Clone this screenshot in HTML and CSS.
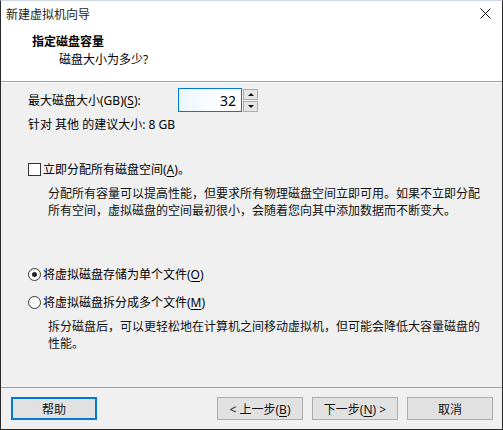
FILE: index.html
```html
<!DOCTYPE html>
<html lang="zh-CN">

<head>
  <meta charset="UTF-8">
  <meta name="viewport" content="width=device-width, initial-scale=1.0">
  <title>新建虚拟机向导</title>
  <link rel="stylesheet" href="styles.css">
</head>

<body>

  <div id="wizard">

    <div id="titlebar">
      <span>新建虚拟机向导</span>
      <svg class="close" width="11" height="11" viewBox="0 0 11 11">
        <path d="M0.5 0.5 L10.5 10.5 M10.5 0.5 L0.5 10.5" stroke="#111" stroke-width="1" fill="none" />
      </svg>
    </div>

    <div id="header">
      <div class="head-title">指定磁盘容量</div>
      <div class="head-sub">磁盘大小为多少?</div>
    </div>

    <div id="content">

      <div class="size-row">
        <label class="size-label">最大磁盘大小(GB)(<u>S</u>):</label>
        <div class="spin">
          <input class="spin-input" type="text" value="32">
          <div class="spin-buttons">
            <div class="spin-btn"><span class="arrow-up"></span></div>
            <div class="spin-btn"><span class="arrow-down"></span></div>
          </div>
        </div>
      </div>

      <div class="hint">针对 其他 的建议大小: 8 GB</div>

      <div class="option check-option">
        <span class="checkbox"></span>
        <span>立即分配所有磁盘空间(<u>A</u>)。</span>
      </div>
      <p class="desc">分配所有容量可以提高性能，但要求所有物理磁盘空间立即可用。如果不立即分配所有空间，虚拟磁盘的空间最初很小，会随着您向其中添加数据而不断变大。</p>

      <div class="option radio-first">
        <span class="radio checked"></span>
        <span>将虚拟磁盘存储为单个文件(<u>O</u>)</span>
      </div>
      <div class="option radio-second">
        <span class="radio"></span>
        <span>将虚拟磁盘拆分成多个文件(<u>M</u>)</span>
      </div>
      <p class="desc">拆分磁盘后，可以更轻松地在计算机之间移动虚拟机，但可能会降低大容量磁盘的性能。</p>

    </div>

    <div id="footer">
      <button class="btn default">帮助</button>
      <div class="spacer"></div>
      <button class="btn">&lt; 上一步(<u>B</u>)</button>
      <button class="btn">下一步(<u>N</u>) &gt;</button>
      <button class="btn">取消</button>
    </div>

  </div>

</body>

</html>
```

FILE: styles.css
```css
* {
  margin: 0;
  padding: 0;
  box-sizing: border-box;
  font-family: 'Noto Sans', 'Noto Sans CJK SC', sans-serif;
}

html,
body {
  width: 503px;
  height: 430px;
  overflow: hidden;
}

body {
  font-size: 12px;
  color: #000;
}

u {
  text-decoration: underline;
  text-underline-offset: 2px;
}

#wizard {
  display: flex;
  flex-direction: column;
  width: 503px;
  height: 430px;
  border: 1px solid #2a2a2a;
  border-top-color: #cfd8e2;
  background-color: #f0f0f0;
}

#titlebar {
  height: 25px;
  display: flex;
  align-items: center;
  justify-content: space-between;
  padding: 0 11px 0 5px;
  background-color: #fff;
  color: #222;
}

#titlebar .close {
  margin-top: -1px;
}

#header {
  height: 56px;
  background-color: #fff;
  border-bottom: 1px solid #a0a0a0;
  padding: 7px 0 0 31px;
}

.head-title {
  font-weight: bold;
  line-height: 18px;
}

.head-sub {
  line-height: 18px;
  padding-left: 27px;
}

#content {
  flex: 1;
  padding: 5px 12px 0 27px;
  border-top: 1px solid #fff;
}

.size-row {
  display: flex;
  align-items: center;
  height: 24px;
}

.size-label {
  width: 150px;
  line-height: 17px;
}

.spin {
  display: flex;
  align-items: center;
  height: 24px;
}

.spin-input {
  width: 64px;
  height: 24px;
  border: 1px solid #0078d7;
  background: linear-gradient(to right, #eaf6fd, #fff 70%);
  text-align: right;
  padding-right: 5px;
  font-size: 14px;
  outline: none;
}

.spin-buttons {
  display: flex;
  flex-direction: column;
  gap: 1px;
  margin-left: 1px;
}

.spin-btn {
  width: 15px;
  height: 11px;
  border: 1px solid #adadad;
  background-color: #e5e5e5;
  display: flex;
  align-items: center;
  justify-content: center;
}

.arrow-up {
  border-left: 3px solid transparent;
  border-right: 3px solid transparent;
  border-bottom: 3px solid #111;
}

.arrow-down {
  border-left: 3px solid transparent;
  border-right: 3px solid transparent;
  border-top: 3px solid #111;
}

.hint {
  line-height: 17px;
  margin-top: 4px;
}

.option {
  display: flex;
  align-items: center;
  line-height: 17px;
  gap: 2px;
}

.check-option {
  margin-top: 28px;
}

.checkbox {
  width: 13px;
  height: 13px;
  border: 1px solid #333;
  background-color: #fff;
}

.radio {
  width: 13px;
  height: 13px;
  border: 1px solid #333;
  border-radius: 50%;
  background-color: #fff;
  display: flex;
  align-items: center;
  justify-content: center;
}

.radio.checked::after {
  content: "";
  width: 5px;
  height: 5px;
  border-radius: 50%;
  background-color: #222;
}

.radio-first {
  margin-top: 47px;
}

.radio-second {
  margin-top: 11px;
}

.desc {
  width: 440px;
  line-height: 17px;
  margin: 7px 0 0 20px;
  color: #111;
}

#footer {
  height: 42px;
  display: flex;
  align-items: flex-start;
  gap: 9px;
  padding: 9px 9px 0 10px;
  border-top: 1px solid #a0a0a0;
}

#footer .spacer {
  flex: 1;
}

.btn {
  width: 86px;
  height: 23px;
  border: 1px solid #adadad;
  background-color: #e1e1e1;
  font-size: 12px;
  color: #111;
}

.btn.default {
  border: 2px solid #0078d7;
}
```
